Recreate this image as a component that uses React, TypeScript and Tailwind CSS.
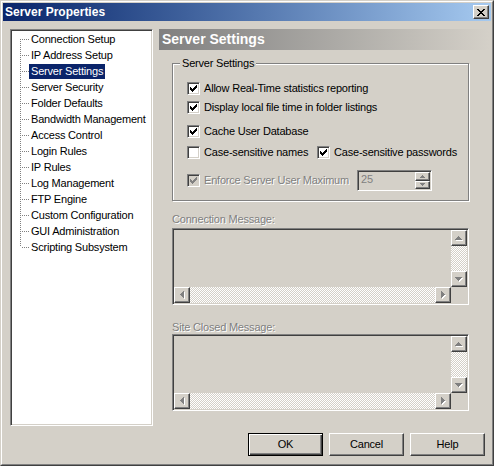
import React from 'react';

type Rect = [number, number, number, number];

const FONT = "font-['Liberation_Sans',Arial,sans-serif] text-[11px] tracking-[-0.2px]";
const RAISED = 'border border-t-white border-l-white border-b-[#404040] border-r-[#404040] shadow-[inset_-1px_-1px_0_#808080] bg-[#d4d0c8]';
const SUNKEN = 'border border-t-[#808080] border-l-[#808080] border-b-white border-r-white shadow-[inset_1px_1px_0_#404040,inset_-1px_-1px_0_#d4d0c8] p-px';
const CHECKER = 'bg-[image:repeating-conic-gradient(#fff_0_25%,#d4d0c8_0_50%)] bg-[length:2px_2px]';

// pixel glyphs (marlett style)
const CHECK: Rect[] = [[6, 0, 1, 1], [5, 1, 2, 1], [0, 2, 1, 1], [4, 2, 3, 1], [0, 3, 2, 1], [3, 3, 3, 1], [0, 4, 5, 1], [1, 5, 3, 1], [2, 6, 1, 1]];
const CLOSE: Rect[] = [[0, 0, 2, 1], [6, 0, 2, 1], [1, 1, 2, 1], [5, 1, 2, 1], [2, 2, 4, 1], [3, 3, 2, 1], [2, 4, 4, 1], [1, 5, 2, 1], [5, 5, 2, 1], [0, 6, 2, 1], [6, 6, 2, 1]];
const UP: Rect[] = [[3, 0, 1, 1], [2, 1, 3, 1], [1, 2, 5, 1], [0, 3, 7, 1]];
const DOWN: Rect[] = [[0, 0, 7, 1], [1, 1, 5, 1], [2, 2, 3, 1], [3, 3, 1, 1]];
const LEFT: Rect[] = [[0, 3, 1, 1], [1, 2, 1, 3], [2, 1, 1, 5], [3, 0, 1, 7]];
const RIGHT: Rect[] = [[0, 0, 1, 7], [1, 1, 1, 5], [2, 2, 1, 3], [3, 3, 1, 1]];
const SPIN_UP: Rect[] = [[2, 0, 1, 1], [1, 1, 3, 1], [0, 2, 5, 1]];
const SPIN_DOWN: Rect[] = [[0, 0, 5, 1], [1, 1, 3, 1], [2, 2, 1, 1]];

const Glyph: React.FC<{ rects: Rect[]; w: number; h: number; color?: string; emboss?: boolean }> = ({ rects, w, h, color = '#000', emboss }) => (
  <svg width={emboss ? w + 1 : w} height={emboss ? h + 1 : h} shapeRendering="crispEdges">
    {emboss && rects.map((r, i) => <rect key={'s' + i} x={r[0] + 1} y={r[1] + 1} width={r[2]} height={r[3]} fill="#fff" />)}
    {rects.map((r, i) => <rect key={i} x={r[0]} y={r[1]} width={r[2]} height={r[3]} fill={color} />)}
  </svg>
);

const treeItems = [
  'Connection Setup',
  'IP Address Setup',
  'Server Settings',
  'Server Security',
  'Folder Defaults',
  'Bandwidth Management',
  'Access Control',
  'Login Rules',
  'IP Rules',
  'Log Management',
  'FTP Engine',
  'Custom Configuration',
  'GUI Administration',
  'Scripting Subsystem',
];

const Checkbox: React.FC<{ checked?: boolean; disabled?: boolean }> = ({ checked, disabled }) => (
  <div className={`w-[13px] h-[13px] shrink-0 flex items-center justify-center ${SUNKEN} ${disabled ? 'bg-[#d4d0c8]' : 'bg-white'}`}>
    {checked && <Glyph rects={CHECK} w={7} h={7} color={disabled ? '#808080' : '#000'} />}
  </div>
);

const ScrollBtn: React.FC<{ rects: Rect[]; w: number; h: number }> = ({ rects, w, h }) => (
  <div className={`w-[16px] h-[16px] flex items-center justify-center ${RAISED}`}>
    <Glyph rects={rects} w={w} h={h} color="#808080" emboss />
  </div>
);

const MessageBox: React.FC = () => (
  <div className={`w-[297px] h-[77px] bg-[#d4d0c8] grid grid-cols-[1fr_16px] grid-rows-[1fr_16px] ${SUNKEN}`}>
    <div />
    {/* vertical scrollbar */}
    <div className="flex flex-col">
      <ScrollBtn rects={UP} w={7} h={4} />
      <div className={`flex-1 ${CHECKER}`} />
      <ScrollBtn rects={DOWN} w={7} h={4} />
    </div>
    {/* horizontal scrollbar */}
    <div className="flex">
      <ScrollBtn rects={LEFT} w={4} h={7} />
      <div className={`flex-1 ${CHECKER}`} />
      <ScrollBtn rects={RIGHT} w={4} h={7} />
    </div>
    <div />
  </div>
);

const DISABLED_TEXT = 'text-[#808080] [text-shadow:1px_1px_0_#fff]';

export default function App() {
  return (
    <div className={`w-[494px] h-[466px] bg-[#d4d0c8] border border-t-[#d4d0c8] border-l-[#d4d0c8] border-b-[#404040] border-r-[#404040] ${FONT}`}>
      <div className="h-full flex flex-col border border-t-white border-l-white border-b-[#808080] border-r-[#808080] p-px">
        {/* title bar */}
        <div className="h-[18px] flex items-center justify-between pl-[2px] pr-[2px] bg-linear-to-r from-[#0a246a] to-[#a6caf0]">
          <span className="text-white font-bold text-[12px] tracking-normal">Server Properties</span>
          <div className={`w-[16px] h-[14px] flex items-center justify-center ${RAISED}`}>
            <Glyph rects={CLOSE} w={8} h={7} />
          </div>
        </div>

        <div className="flex-1 flex flex-col pl-[7px] pt-[8px]">
          <div className="flex h-[397px] gap-[6px]">
            {/* tree */}
            <div className={`w-[143px] h-full bg-white ${SUNKEN}`}>
              {treeItems.map((item, i) => {
                const first = i === 0;
                const last = i === treeItems.length - 1;
                const selected = item === 'Server Settings';
                return (
                  <div key={item} className="flex h-[16px] items-center">
                    <div className="w-[8px] shrink-0" />
                    <div className="flex items-center h-full w-[9px] shrink-0">
                      <div
                        className={`w-px bg-[image:repeating-linear-gradient(to_bottom,#808080_0_1px,transparent_1px_2px)] ${
                          first ? 'h-[8px] self-end' : last ? 'h-[8px] self-start' : 'h-full'
                        }`}
                      />
                      <div className="w-[8px] h-px bg-[image:repeating-linear-gradient(to_right,transparent_0_1px,#808080_1px_2px)]" />
                    </div>
                    <span className={`px-[2px] h-[15px] leading-[15px] whitespace-nowrap ${selected ? 'bg-[#0a246a] text-white' : 'text-black'}`}>
                      {item}
                    </span>
                  </div>
                );
              })}
            </div>

            {/* right panel */}
            <div className="flex-1 flex flex-col">
              <div className="h-[21px] flex items-center pl-[3px] bg-linear-to-r from-[#808080] to-[#d4d0c8] mr-[2px]">
                <span className="text-white font-bold text-[14px] tracking-normal">Server Settings</span>
              </div>

              <div className="pl-[13px] flex flex-col">
                {/* group box */}
                <div className="mt-[13px] w-[297px] h-[138px] flex flex-col border border-[#808080] shadow-[inset_1px_1px_0_#fff,1px_1px_0_#fff]">
                  <span className="self-start -mt-[7px] ml-[7px] px-[2px] leading-[13px] bg-[#d4d0c8] text-black">Server Settings</span>
                  <div className="pl-[14px] flex flex-col text-black leading-[13px]">
                    <div className="mt-[12px] h-[13px] flex items-center gap-[4px]">
                      <Checkbox checked />
                      <span>Allow Real-Time statistics reporting</span>
                    </div>
                    <div className="mt-[6px] h-[13px] flex items-center gap-[4px]">
                      <Checkbox checked />
                      <span>Display local file time in folder listings</span>
                    </div>
                    <div className="mt-[11px] h-[13px] flex items-center gap-[4px]">
                      <Checkbox checked />
                      <span>Cache User Database</span>
                    </div>
                    <div className="mt-[8px] h-[13px] flex items-center">
                      <div className="w-[130px] flex items-center gap-[4px]">
                        <Checkbox />
                        <span>Case-sensitive names</span>
                      </div>
                      <div className="flex items-center gap-[4px]">
                        <Checkbox checked />
                        <span>Case-sensitive passwords</span>
                      </div>
                    </div>
                    <div className="mt-[11px] h-[21px] flex items-center">
                      <div className="w-[170px] flex items-center gap-[4px]">
                        <Checkbox checked disabled />
                        <span className={DISABLED_TEXT}>Enforce Server User Maximum</span>
                      </div>
                      <div className={`w-[75px] h-[21px] flex bg-[#d4d0c8] ${SUNKEN}`}>
                        <span className="flex-1 pl-[2px] pt-px text-[#808080]">25</span>
                        <div className="w-[15px] flex flex-col">
                          <div className={`flex-1 flex items-center justify-center ${RAISED}`}>
                            <Glyph rects={SPIN_UP} w={5} h={3} color="#808080" />
                          </div>
                          <div className={`flex-1 flex items-center justify-center ${RAISED}`}>
                            <Glyph rects={SPIN_DOWN} w={5} h={3} color="#808080" />
                          </div>
                        </div>
                      </div>
                    </div>
                  </div>
                </div>

                <span className={`mt-[12px] leading-[13px] ${DISABLED_TEXT}`}>Connection Message:</span>
                <div className="mt-[2px]">
                  <MessageBox />
                </div>

                <span className={`mt-[16px] leading-[13px] ${DISABLED_TEXT}`}>Site Closed Message:</span>
                <div>
                  <MessageBox />
                </div>
              </div>
            </div>
          </div>

          {/* dialog buttons */}
          <div className="mt-[7px] flex justify-end gap-[6px] pr-[6px] text-black">
            <button className="w-[75px] h-[23px] border border-black bg-[#d4d0c8] shadow-[inset_1px_1px_0_#fff,inset_-1px_-1px_0_#404040,inset_-2px_-2px_0_#808080]">
              OK
            </button>
            <button className={`w-[75px] h-[23px] ${RAISED}`}>Cancel</button>
            <button className={`w-[75px] h-[23px] ${RAISED}`}>Help</button>
          </div>
        </div>
      </div>
    </div>
  );
}
